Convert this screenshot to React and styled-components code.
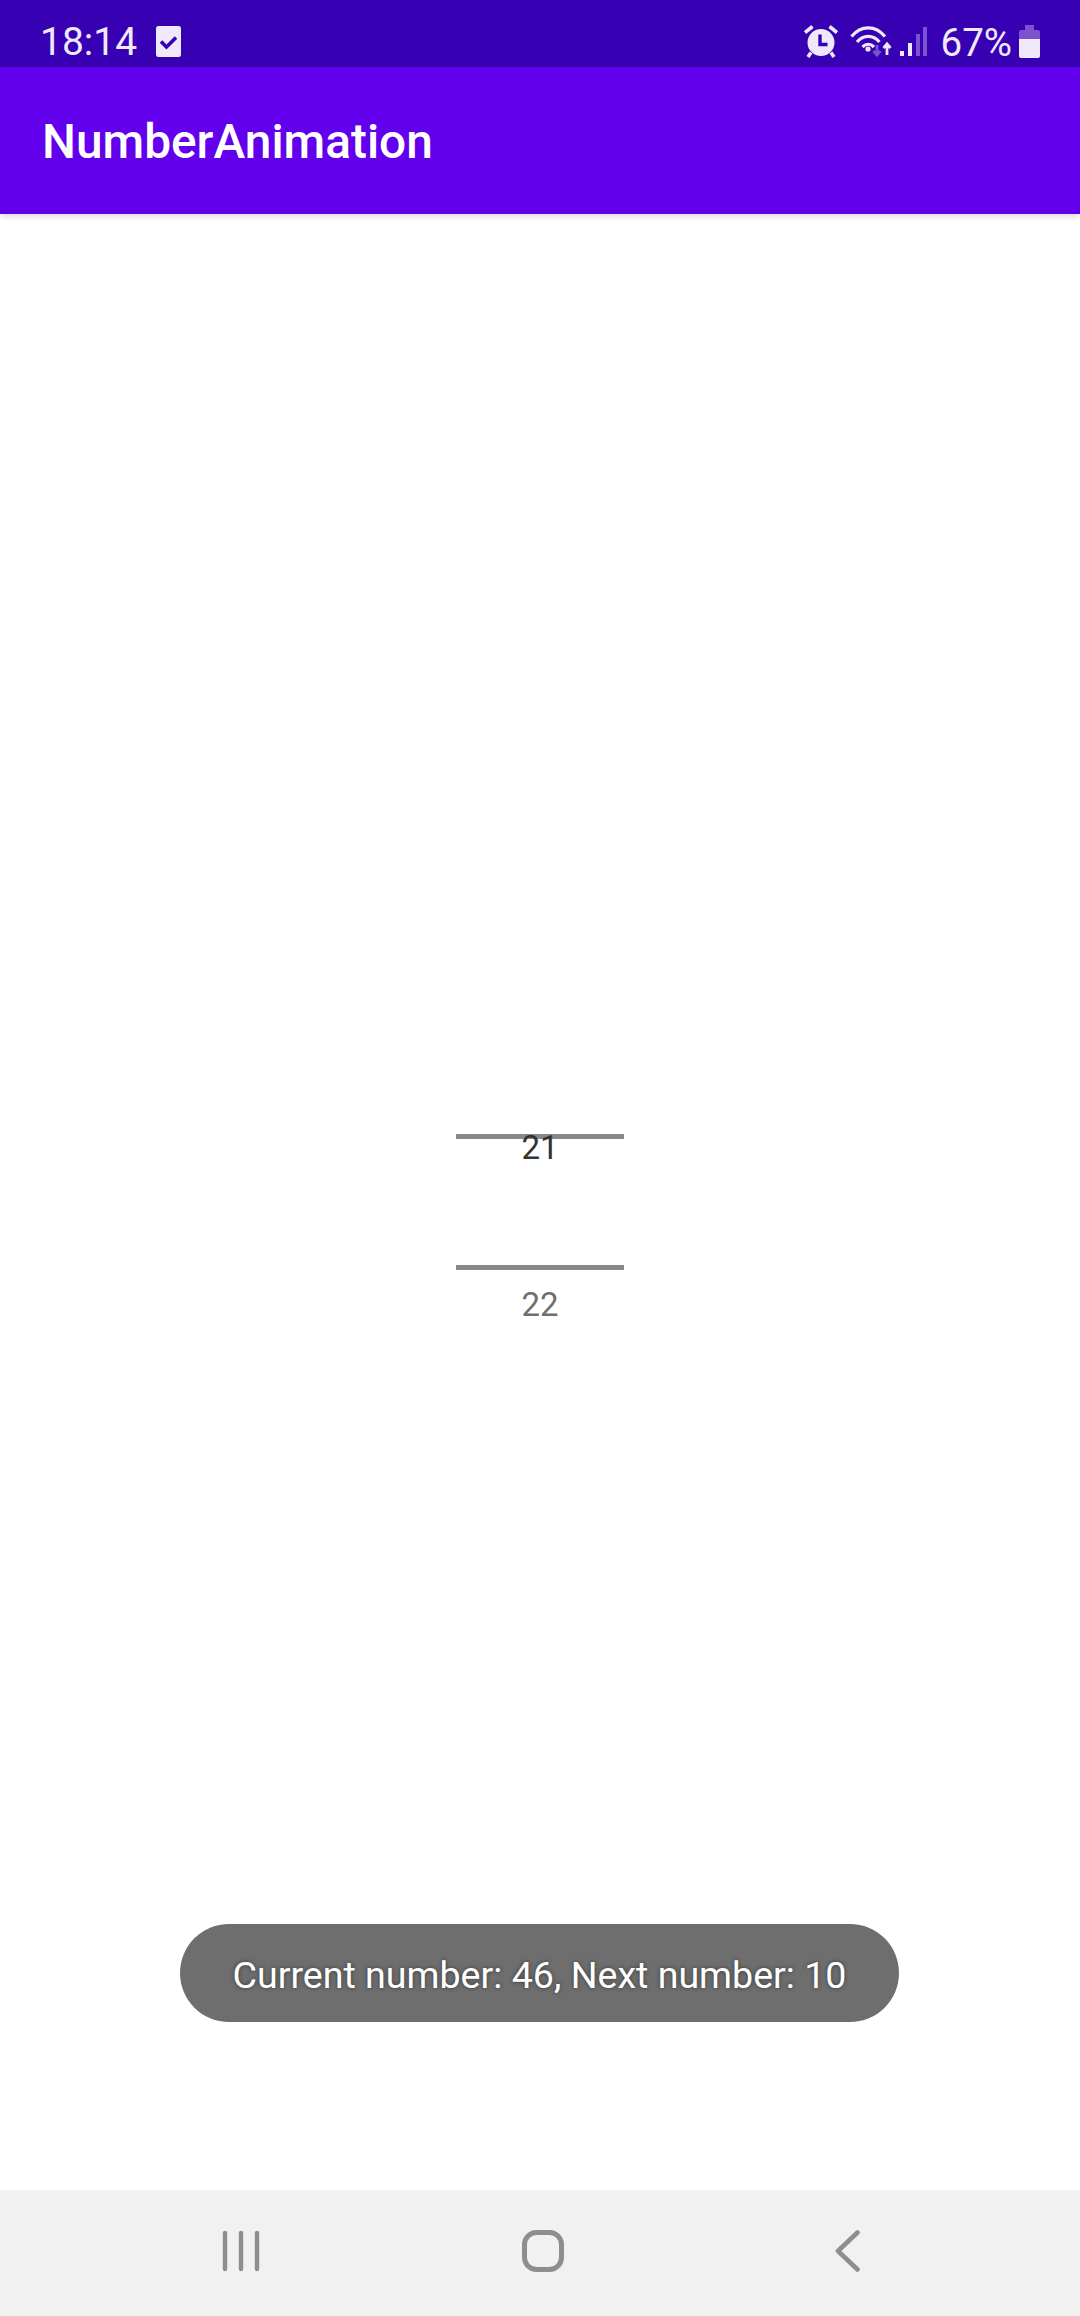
import React from "react";
import styled, { createGlobalStyle } from "styled-components";

const GlobalStyle = createGlobalStyle`
    html, body {
        margin: 0;
        padding: 0;
        background-color: white;
        font-family: Roboto, "Liberation Sans", sans-serif;
    }
`;

const Screen = styled.div`
    position: relative;
    display: flex;
    flex-direction: column;
    width: 1080px;
    height: 2316px;
    overflow: hidden;
`;

const StatusBar = styled.div`
    display: flex;
    align-items: center;
    justify-content: space-between;
    height: 67px;
    padding: 15px 40px 0 40px;
    box-sizing: border-box;
    background-color: #3700b3;
    color: #efe9fb;
`;

const StatusGroup = styled.div`
    display: flex;
    align-items: center;
`;

const Clock = styled.span`
    font-size: 39px;
    line-height: 51px;
    padding-top: 2px;
    margin-right: 19px;
`;

const Percent = styled.span`
    font-size: 38.5px;
    line-height: 51px;
    padding-top: 2px;
    margin: 0 7px 0 14px;
`;

const StatusIcon = styled.svg`
    display: block;
    flex: none;
    margin-left: ${(props) => props.$gap || 0}px;
`;

const AppBar = styled.header`
    display: flex;
    align-items: center;
    height: 147px;
    padding: 2px 0 0 42px;
    box-sizing: border-box;
    background-color: #6200ee;
    box-shadow: 0 3px 5px rgba(0, 0, 0, 0.12);
    color: white;
    font-size: 47.8px;
    font-weight: 500;
`;

const Content = styled.main`
    flex: 1;
    display: flex;
    align-items: center;
    justify-content: center;
`;

const Picker = styled.div`
    position: relative;
    width: 168px;
    height: 136px;
    box-sizing: border-box;
    border-top: 5px solid #888888;
    border-bottom: 5px solid #888888;
`;

const PickerNumber = styled.span`
    position: absolute;
    left: 0;
    right: 0;
    top: ${(props) => props.$top}px;
    text-align: center;
    font-size: 33px;
    line-height: 38px;
    color: ${(props) => props.$color};
`;

const Toast = styled.div`
    position: absolute;
    left: 180px;
    top: 1924px;
    display: flex;
    align-items: center;
    justify-content: center;
    width: 719px;
    height: 98px;
    padding-top: 3px;
    box-sizing: border-box;
    border-radius: 49px;
    background-color: #6e6e6e;
    color: white;
    font-size: 37.6px;
    text-shadow: 0 0 4px rgba(0, 0, 0, 0.5);
`;

const NavBar = styled.nav`
    display: flex;
    align-items: center;
    height: 126px;
    background-color: #f1f1f1;
    padding-bottom: 4px;
    box-sizing: border-box;
    padding-left: 222px;
`;

const NavIcon = styled.svg`
    display: block;
    flex: none;
    margin-left: ${(props) => props.$gap || 0}px;
`;

const DoneIcon = () => (
    <StatusIcon width="25" height="31" viewBox="0 0 25 31">
        <rect width="25" height="31" rx="2.5" fill="#efe9fb" />
        <path d="M5 15.5l5.500 5.500 9.500-9.500" fill="none" stroke="#3700b3" strokeWidth="3.6" />
    </StatusIcon>
);

const AlarmIcon = () => (
    <StatusIcon width="34" height="33" viewBox="0 0 34 33">
        <circle cx="17" cy="17.5" r="13.500" fill="#efe9fb" />
        <path d="M1 7.500L8.500 1.500M33 7.500L25.500 1.500M7 27.500L4 32M27 27.500L30 32" stroke="#efe9fb" strokeWidth="3.600" fill="none" />
        <path d="M16 9.500V19.500H23.500" stroke="#3700b3" strokeWidth="3.400" fill="none" />
    </StatusIcon>
);

const WifiIcon = () => (
    <StatusIcon $gap={12} width="43" height="32" viewBox="0 0 43 32">
        <g fill="none" stroke="#efe9fb" strokeWidth="3.200">
            <path d="M1.500 11.500C11 0 25.500 0 35 11.500" />
            <path d="M7 17C13.500 9.500 23 9.500 29.500 17" />
            <path d="M12.500 22C16 18.500 20.500 18.500 24 22" />
        </g>
        <circle cx="18" cy="24" r="2.600" fill="#efe9fb" />
        <path d="M27 20V29M23.500 26L27 30L30.500 26" fill="none" stroke="#7c52d0" strokeWidth="2.800" />
        <path d="M37 30V19M33.500 23L37 19L40.500 23" fill="none" stroke="#efe9fb" strokeWidth="2.800" />
    </StatusIcon>
);

const SignalIcon = () => (
    <StatusIcon $gap={7} width="27" height="29" viewBox="0 0 27 29">
        <rect x="0" y="24" width="4" height="5" fill="#efe9fb" />
        <rect x="8" y="16" width="4" height="13" fill="#efe9fb" />
        <rect x="16" y="7" width="4" height="22" fill="#7c52d0" />
        <rect x="23" y="0" width="4" height="29" fill="#7c52d0" />
    </StatusIcon>
);

const BatteryIcon = () => (
    <StatusIcon width="21" height="33" viewBox="0 0 21 33">
        <path d="M6 0H15V5H19A2 2 0 0 1 21 7V14H0V7A2 2 0 0 1 2 5H6Z" fill="#7c52d0" />
        <path d="M0 14H21V31A2 2 0 0 1 19 33H2A2 2 0 0 1 0 31Z" fill="#efe9fb" />
    </StatusIcon>
);

const RecentsIcon = () => (
    <NavIcon width="38" height="42" viewBox="0 0 38 42">
        <path d="M3 3V39M19 3V39M35 3V39" stroke="#8e8e8e" strokeWidth="4.400" strokeLinecap="round" fill="none" />
    </NavIcon>
);

const HomeIcon = () => (
    <NavIcon $gap={262} width="42" height="42" viewBox="0 0 42 42">
        <rect x="2.500" y="2.500" width="37" height="37" rx="12" stroke="#8e8e8e" strokeWidth="5" fill="none" />
    </NavIcon>
);

const BackIcon = () => (
    <NavIcon $gap={271} width="25" height="42" viewBox="0 0 25 42">
        <path d="M22.500 2.500L3 21L22.500 39.500" stroke="#8e8e8e" strokeWidth="4.600" strokeLinecap="round" strokeLinejoin="round" fill="none" />
    </NavIcon>
);

const App = () => (
    <Screen>
        <GlobalStyle />
        <StatusBar>
            <StatusGroup>
                <Clock>18:14</Clock>
                <DoneIcon />
            </StatusGroup>
            <StatusGroup>
                <AlarmIcon />
                <WifiIcon />
                <SignalIcon />
                <Percent>67%</Percent>
                <BatteryIcon />
            </StatusGroup>
        </StatusBar>
        <AppBar>NumberAnimation</AppBar>
        <Content>
            <Picker>
                <PickerNumber $top={-10} $color="#333333">21</PickerNumber>
                <PickerNumber $top={147} $color="#6f6f6f">22</PickerNumber>
            </Picker>
        </Content>
        <Toast>Current number: 46, Next number: 10</Toast>
        <NavBar>
            <RecentsIcon />
            <HomeIcon />
            <BackIcon />
        </NavBar>
    </Screen>
);

export default App;
